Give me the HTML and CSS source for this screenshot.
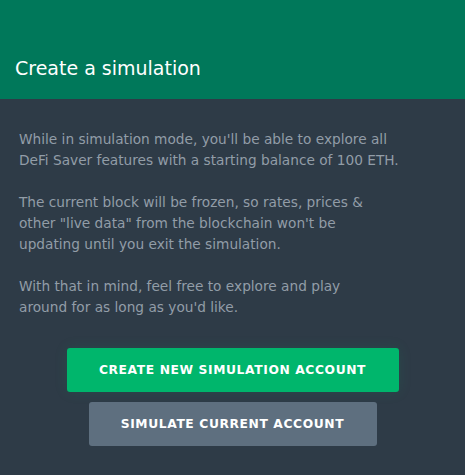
FILE: index.html
```html
<!DOCTYPE html>
<html lang="en">
<head>
    <meta charset="UTF-8">
    <meta name="viewport" content="width=device-width, initial-scale=1.0">
    <title>Create a simulation</title>
    <link rel="stylesheet" href="styles.css">
</head>
<body>
    <div class="modal">
        <header class="modal-header">
            <h1>Create a simulation</h1>
        </header>

        <section class="modal-body">
            <p>While in simulation mode, you'll be able to explore all<br>DeFi Saver features with a starting balance of 100 ETH.</p>
            <p>The current block will be frozen, so rates, prices &amp;<br>other "live data" from the blockchain won't be<br>updating until you exit the simulation.</p>
            <p>With that in mind, feel free to explore and play<br>around for as long as you'd like.</p>
        </section>

        <div class="modal-actions">
            <button class="btn btn-green">Create new simulation account</button>
            <button class="btn btn-grey">Simulate current account</button>
        </div>
    </div>
</body>
</html>
```

FILE: styles.css
```css
/* Base */
body {
    margin: 0;
    font-family: 'DejaVu Sans', sans-serif;
    background: #2e3b47;
}

.modal {
    width: 465px;
    height: 475px;
    background: #2e3b47;
}

.modal-header {
    height: 99px;
    background: #00785a;
    display: flex;
    align-items: flex-end;
    box-sizing: border-box;
    padding: 0 15px 20px;
}

.modal-header h1 {
    margin: 0;
    font-size: 19px;
    font-weight: normal;
    color: #ffffff;
}

.modal-body {
    padding: 30px 19px 0;
}

.modal-body p {
    margin: 0 0 21px;
    font-size: 13.7px;
    line-height: 21px;
    color: #929da7;
}

.modal-actions {
    display: flex;
    flex-direction: column;
    align-items: center;
    gap: 10px;
    margin-top: 30px;
}

.btn {
    height: 44px;
    border: none;
    border-radius: 3px;
    color: #ffffff;
    font-family: 'DejaVu Sans', sans-serif;
    font-weight: bold;
    font-size: 12.3px;
    letter-spacing: 0.6px;
    text-transform: uppercase;
    cursor: pointer;
}

.btn-green {
    width: 332px;
    background: #00b66c;
    box-shadow: 0 0 14px rgba(0, 182, 108, 0.12);
}

.btn-grey {
    width: 288px;
    background: #5e6f7f;
}
```
